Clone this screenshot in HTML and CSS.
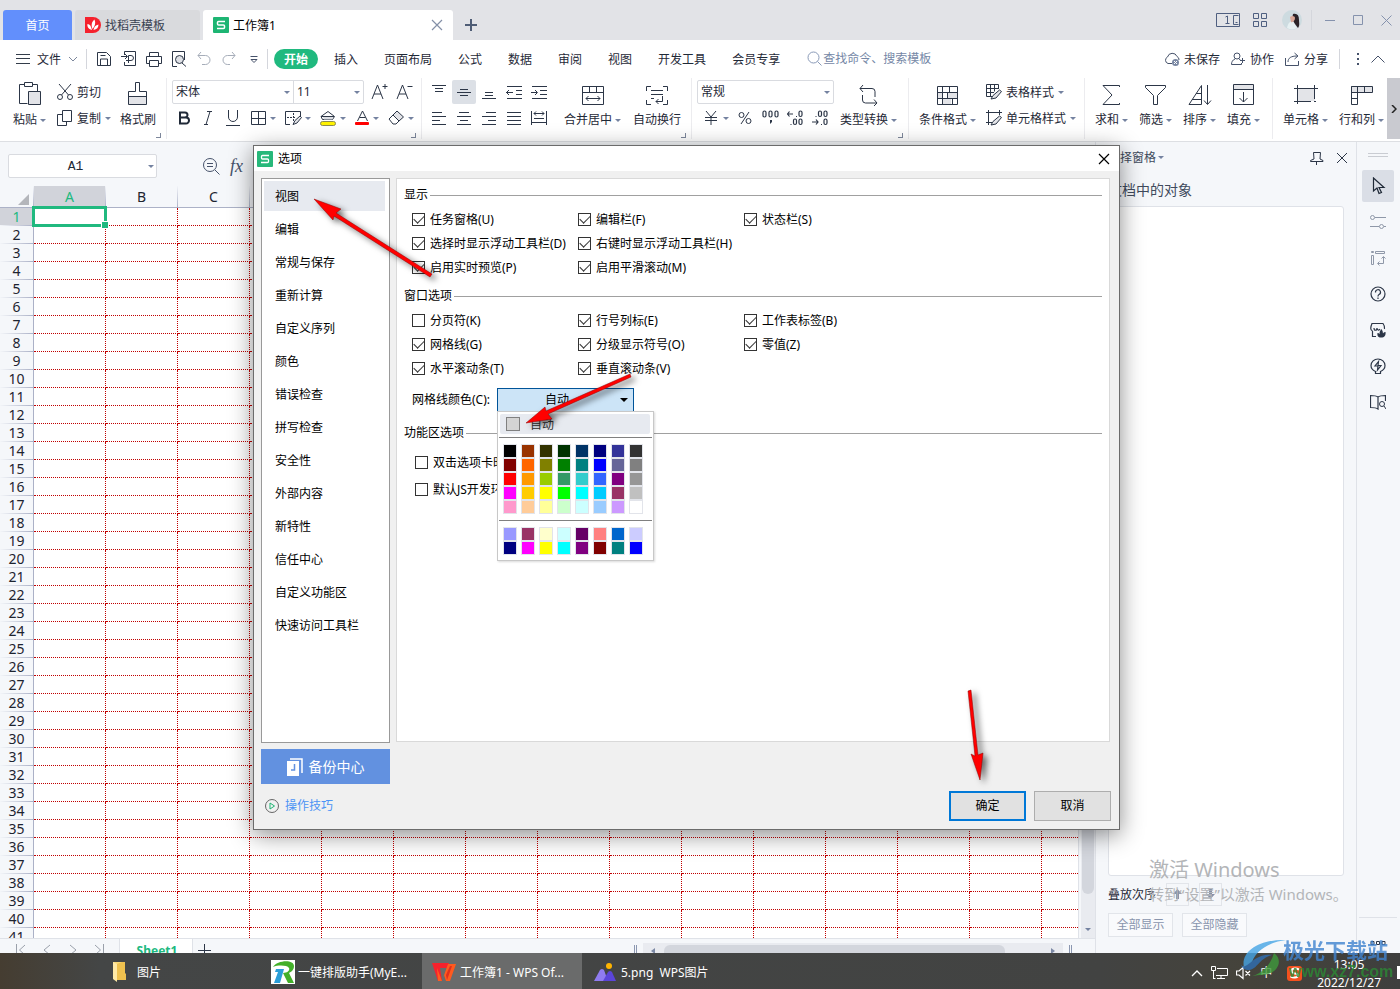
FILE: index.html
```html
<!DOCTYPE html>
<html lang="zh-CN">
<head>
<meta charset="utf-8">
<title>工作簿1 - WPS Office</title>
<link rel="stylesheet" href="styles.css">
</head>
<body>
<div class="desktop">
  <header class="titlebar">
    <button class="tab tab-home"><span>首页</span></button>
    <button class="tab tab-store">
      <svg width="16" height="16" viewBox="0 0 16 16"><path d="M0 0h8a8 8 0 0 1 0 16H0z" fill="#f5222d"/><path d="M7 13C3 12 2 9 2.500 7 5 7 6 9 7 13zM7.500 12C6 8 6.500 5 9.500 2.500 11 6 10 9 7.500 12zM8.500 13C9 10 10.500 8 13.500 7.500 13.500 10.500 12 12.500 8.500 13z" fill="#fff"/></svg>
      <span>找稻壳模板</span>
    </button>
    <button class="tab tab-book">
      <svg width="16" height="16" viewBox="0 0 16 16"><rect width="16" height="16" rx="1" fill="#1db573"/><path d="M12 4.500H5.500a1 1 0 0 0-1 1V7a1 1 0 0 0 1 1h5a1 1 0 0 1 1 1v1.500a1 1 0 0 1-1 1H4" fill="none" stroke="#fff" stroke-width="1.500"/></svg>
      <span>工作簿1</span>
      <svg class="push" width="12" height="12" viewBox="0 0 12 12"><path d="M1 1l10 10M11 1L1 11" stroke="#8490a8" stroke-width="1.200"/></svg>
    </button>
    <button class="plain tab-add" aria-label="新建"><svg width="12" height="12" viewBox="0 0 12 12"><path d="M6 0v12M0 6h12" stroke="#4f5d76" stroke-width="2"/></svg></button>
    <div class="winctl">
      <svg width="24" height="14" viewBox="0 0 24 14"><path d="M.5.500h23v13H.5zM22.500 2.500h-5v9h5M19.500 9.500h2M9.500 4l2-1v8M9.500 10.500h4" fill="none" stroke="#4f5f80"/></svg>
      <svg width="14" height="14" viewBox="0 0 14 14"><path d="M.5.500h5v5h-5zM8.500.500h5v5h-5zM.5 8.500h5v5h-5zM8.500 8.500h5v5h-5z" fill="none" stroke="#4f5f80"/></svg>
      <svg width="20" height="20" viewBox="0 0 20 20"><circle cx="10" cy="10" r="10" fill="#cddbe0"/><path d="M5 18c1-5 3-7 6-7l4 7a10 10 0 0 1-10 0z" fill="#e6f0f2"/><path d="M11 4c4-1 6 1 6 6 0 3 1 5-1 8l-3-4-3-5z" fill="#2a2328"/><path d="M8 7c2-2 5-1 5 1s-2 5-4 4z" fill="#d9a898"/></svg>
      <i class="vline"></i>
      <svg width="10" height="12" viewBox="0 0 10 12"><path d="M0 6.500h10" stroke="#8592ad"/></svg>
      <svg width="10" height="10" viewBox="0 0 10 10"><path d="M.5.500h9v9h-9z" fill="none" stroke="#8592ad"/></svg>
      <svg width="11" height="11" viewBox="0 0 11 11"><path d="M.5.500l10 10M10.500.500l-10 10" stroke="#8592ad"/></svg>
    </div>
  </header>

  <nav class="menubar">
    <button class="plain file-menu">
      <svg width="14" height="10" viewBox="0 0 14 10"><path d="M0 .500h14M0 4.500h14M0 9.500h14" stroke="#333c4a"/></svg>
      <span>文件</span>
      <svg width="10" height="6" viewBox="0 0 10 6"><path d="M1 1l4 4 4-4" fill="none" stroke="#7c879c"/></svg>
    </button>
    <i class="vline"></i>
    <div class="quick">
      <svg width="16" height="16" viewBox="0 0 16 16"><path d="M1.500 1.500h9l4 4v9h-13zM4.500 14v-6h7v6M4.500 4.500h5" fill="none" stroke="#2c3647"/></svg>
      <svg width="16" height="16" viewBox="0 0 16 16"><path d="M3.500 4V.500h11v14h-11V11M0 5.500h6M4 3l2.500 2.500L4 8M7.500 12V4.500H10a2.500 2.500 0 0 1 0 5H5" fill="none" stroke="#2c3647"/></svg>
      <svg width="16" height="16" viewBox="0 0 16 16"><path d="M3.500 5V1.500h9V5M3.500 12.500h-3v-7h15v7h-3M3.500 9.500h9v6h-9z" fill="none" stroke="#2c3647"/></svg>
      <svg width="16" height="16" viewBox="0 0 16 16"><path d="M6 15.500H1.500V.500h12V9" fill="none" stroke="#2c3647"/><circle cx="8.500" cy="8.500" r="4" fill="#dfe1e6" stroke="#2c3647"/><path d="M11 12l4 3.500" stroke="#2c3647"/></svg>
      <svg width="16" height="16" viewBox="0 0 16 16"><path d="M5 1L2 4.500 5 8M2 4.500h7.500a4.500 4.500 0 0 1 0 9H6" fill="none" stroke="#a6adb9"/></svg>
      <svg width="16" height="16" viewBox="0 0 16 16"><path d="M11 1l3 3.500L11 8M14 4.500H6.500a4.500 4.500 0 0 0 0 9H9" fill="none" stroke="#a6adb9"/></svg>
      <svg width="16" height="16" viewBox="0 0 16 16"><path d="M4.500 5.500h7M5 8.500l3 3 3-3z" fill="none" stroke="#46526a"/></svg>
    </div>
    <i class="vline"></i>
    <div class="menus">
      <button class="menu menu-on">开始</button>
      <button class="menu">插入</button>
      <button class="menu">页面布局</button>
      <button class="menu">公式</button>
      <button class="menu">数据</button>
      <button class="menu">审阅</button>
      <button class="menu">视图</button>
      <button class="menu">开发工具</button>
      <button class="menu">会员专享</button>
    </div>
    <label class="search">
      <svg width="16" height="16" viewBox="0 0 16 16"><circle cx="6.500" cy="6.500" r="5.500" fill="none" stroke="#8a9ab8"/><path d="M10.500 10.500l4 4" stroke="#8a9ab8"/></svg>
      <input type="text" aria-label="查找命令" placeholder="查找命令、搜索模板">
    </label>
    <div class="share">
      <button class="plain"><svg width="16" height="16" viewBox="0 0 16 16"><path d="M8 12.500H4A3.500 3.500 0 0 1 3.500 6 5 5 0 0 1 13 5.500 3.500 3.500 0 0 1 15 9" fill="none" stroke="#46526a"/><circle cx="11.500" cy="11.500" r="3.500" fill="#7a88a3"/><path d="M10 10l3 3M13 10l-3 3" stroke="#fff"/></svg><span>未保存</span></button>
      <button class="plain"><svg width="15" height="14" viewBox="0 0 15 14"><circle cx="6" cy="4" r="3" fill="none" stroke="#46526a"/><path d="M4 7C1.500 8 .5 10 .5 12.500h10V11M8 7l1.500 1M9 8.500h5M11.500 6v5" fill="none" stroke="#46526a"/></svg><span>协作</span></button>
      <button class="plain"><svg width="15" height="14" viewBox="0 0 15 14"><path d="M.5 6v7.500h13V9M3 10c0-4 3-6 9-6M9.500 1L13 4 9.500 7" fill="none" stroke="#46526a"/></svg><span>分享</span></button>
      <i class="vline"></i>
      <svg width="3" height="12" viewBox="0 0 3 12"><path d="M0 0h2v2H0zM0 5h2v2H0zM0 10h2v2H0z" fill="#46526a"/></svg>
      <svg width="14" height="8" viewBox="0 0 14 8"><path d="M.5 7.500L7 1l6.500 6.500" fill="none" stroke="#46526a"/></svg>
    </div>
  </nav>

  <section class="ribbon">
    <div class="group g-clip">
      <button class="big"><svg width="22" height="24" viewBox="0 0 22 24"><path d="M5.500 2.500H.5v19h8M13.500 2.500h5V9M5.500.500h8v4h-8z" fill="none" stroke="#2c3647"/><path d="M9.500 9.500h12v13h-12z" fill="#e3e4e8" stroke="#2c3647"/></svg><span>粘贴<i class="caret"></i></span></button>
      <div class="stack">
        <button class="small"><svg width="16" height="16" viewBox="0 0 16 16"><path d="M2 0l9.500 11M14 0L4.500 11" stroke="#2c3647"/><circle cx="3" cy="13" r="2.500" fill="none" stroke="#2c3647"/><circle cx="13" cy="13" r="2.500" fill="none" stroke="#2c3647"/></svg><span>剪切</span></button>
        <button class="small"><svg width="16" height="16" viewBox="0 0 16 16"><path d="M5.500.500h9v11h-9zM5.500 4.500h-5v11h9v-4" fill="none" stroke="#2c3647"/></svg><span>复制</span><i class="caret"></i></button>
      </div>
      <button class="big"><svg width="20" height="24" viewBox="0 0 20 24"><path d="M1 15h17v8H1z" fill="#e3e4e8"/><path d="M7.500 9.500v-9h4v9h7v13h-18v-13zM.5 14.500h18" fill="none" stroke="#2c3647"/></svg><span>格式刷</span></button>
      <i class="corner"></i>
    </div>
    <div class="group g-font">
      <div class="fontrow">
        <div class="combo">
          <div class="pick pick-font"><select aria-label="字体"><option>宋体</option></select><i class="caret"></i></div>
          <div class="pick pick-size"><select aria-label="字号"><option>11</option></select><i class="caret"></i></div>
        </div>
        <svg width="18" height="18" viewBox="0 0 18 18"><path d="M1 16L6.500 2 12 16M3 11h7M11.500 3.500h5M14 1v5" fill="none" stroke="#2c3647"/></svg>
        <svg width="18" height="18" viewBox="0 0 18 18"><path d="M1 16L6.500 2 12 16M3 11h7M11.500 3.500h5" fill="none" stroke="#2c3647"/></svg>
      </div>
      <div class="fmtrow">
        <svg width="14" height="14" viewBox="0 0 14 14"><path d="M3 1.500h5a2.500 2.500 0 0 1 0 5H3zM3 6.500h6a3 3 0 0 1 0 6H3z" fill="none" stroke="#1f2937" stroke-width="2"/></svg>
        <svg width="14" height="14" viewBox="0 0 14 14"><path d="M6 .500h5M3 13.500h4M9 .500L5 13.500" fill="none" stroke="#2c3647"/></svg>
        <svg width="16" height="16" viewBox="0 0 16 16"><path d="M3.500 0v7a4.500 4.500 0 0 0 9 0V0M1 15.500h14" fill="none" stroke="#2c3647"/></svg>
        <span class="withcaret"><svg width="16" height="16" viewBox="0 0 16 16"><path d="M.5 1.500h14v13H.5zM7.500 1.500v13M.5 8.500h14" fill="none" stroke="#2c3647"/></svg><i class="caret"></i></span>
        <span class="withcaret"><svg width="17" height="16" viewBox="0 0 17 16"><path d="M5 14.500H.5V1.500h15V6" fill="none" stroke="#2c3647"/><path d="M2 7.500h8M8.500 3v8" stroke="#2c3647" stroke-dasharray="2 1"/><path d="M8 14.500l2-4L15 6l1.500 1.500-4.500 5.500z" fill="#e3e4e8" stroke="#2c3647"/></svg><i class="caret"></i></span>
        <span class="withcaret"><svg width="17" height="16" viewBox="0 0 17 16"><path d="M2.500 9.500L1 6.500l7-5 6.500 5-2 3z" fill="none" stroke="#2c3647"/><path d="M3 7h10l-1 2.500H4z" fill="#dcdee3"/><path d="M1 6.500h13" stroke="#2c3647"/><rect x=".5" y="11.500" width="15" height="4" rx="2" fill="#fff200" stroke="#8b8a52"/></svg><i class="caret"></i></span>
        <span class="withcaret"><svg width="15" height="16" viewBox="0 0 15 16"><path d="M2.500 11l5-10 5 10M4.500 7.500h6" fill="none" stroke="#2c3647"/><rect y="12" width="14" height="3" rx="1" fill="#f00"/></svg><i class="caret"></i></span>
        <span class="withcaret"><svg width="17" height="16" viewBox="0 0 17 16"><path d="M1 9l4-4 6 6-3 3H5z" fill="none" stroke="#2c3647"/><path d="M5 5l4-4 6.500 6-4.500 4z" fill="#e3e4e8" stroke="#2c3647"/></svg><i class="caret"></i></span>
      </div>
      <i class="corner"></i>
    </div>
    <div class="group g-align">
      <div class="aligns">
        <button><svg width="16" height="16" viewBox="0 0 16 16"><path d="M1 1.500h14M4 4.500h8M4 7.500h8" stroke="#2c3647"/></svg></button>
        <button class="on"><svg width="16" height="16" viewBox="0 0 16 16"><path d="M4 5.500h8M1 8.500h14M4 11.500h8" stroke="#2c3647"/></svg></button>
        <button><svg width="16" height="16" viewBox="0 0 16 16"><path d="M4 8.500h8M4 11.500h8M1 14.500h14" stroke="#2c3647"/></svg></button>
        <button><svg width="16" height="16" viewBox="0 0 16 16"><path d="M1 2.500h15M10 6.500h6M10 10.500h6M1 14.500h15M0 8.500h7M3 6L.5 8.500 3 11" fill="none" stroke="#2c3647"/></svg></button>
        <button><svg width="16" height="16" viewBox="0 0 16 16"><path d="M1 2.500h15M9 6.500h7M9 10.500h7M1 14.500h15M0 8.500h6M4 6l2.500 2.500L4 11" fill="none" stroke="#2c3647"/></svg></button>
        <button><svg width="16" height="16" viewBox="0 0 16 16"><path d="M1 2.500h10M1 6.500h14M1 10.500h8M1 14.500h14" stroke="#2c3647"/></svg></button>
        <button><svg width="16" height="16" viewBox="0 0 16 16"><path d="M3 2.500h10M1 6.500h14M4 10.500h8M1 14.500h14" stroke="#2c3647"/></svg></button>
        <button><svg width="16" height="16" viewBox="0 0 16 16"><path d="M5 2.500h10M1 6.500h14M7 10.500h8M1 14.500h14" stroke="#2c3647"/></svg></button>
        <button><svg width="16" height="16" viewBox="0 0 16 16"><path d="M1 2.500h14M1 6.500h14M1 10.500h14M1 14.500h14" stroke="#2c3647"/></svg></button>
        <button><svg width="16" height="16" viewBox="0 0 16 16"><path d="M.5 1v14M15.500 1v14M3 3.500h10M5 1.500l-2 2 2 2M11 1.500l2 2-2 2M3 8.500h10M1 12.500h14" fill="none" stroke="#2c3647"/></svg></button>
      </div>
      <button class="big"><svg width="22" height="24" viewBox="0 0 22 24"><path d="M.5 4.500h21v18H.5zM.5 10.500h21M7.500 4.500v6M14.500 4.500v6M4 16.500h14M6.500 14L4 16.500 6.500 19M15.500 14l2.500 2.500-2.500 2.500" fill="none" stroke="#2c3647"/></svg><span>合并居中<i class="caret"></i></span></button>
      <button class="big"><svg width="22" height="24" viewBox="0 0 22 24"><path d="M5 4.500H.5V9M17 4.500h4.500V9M.5 18v4.500H5M21.500 18v4.500H17M5 8.500h12M5 12.500h12M5 16.500h3M16.500 14v5.500H10M12.500 17L10 19.500l2.500 2.500" fill="none" stroke="#2c3647"/></svg><span>自动换行</span></button>
      <i class="corner"></i>
    </div>
    <div class="group g-num">
      <div class="stack">
        <div class="combo"><div class="pick pick-num"><select aria-label="数字格式"><option>常规</option></select><i class="caret"></i></div></div>
        <div class="numrow">
          <span class="withcaret"><svg width="14" height="14" viewBox="0 0 14 14"><path d="M2 0l5 6 5-6M1 6.500h12M1 9.500h12M7 6v8" fill="none" stroke="#2c3647"/></svg><i class="caret"></i></span>
          <svg width="14" height="14" viewBox="0 0 14 14"><circle cx="3.500" cy="4" r="2.500" fill="none" stroke="#2c3647"/><circle cx="10.500" cy="10" r="2.500" fill="none" stroke="#2c3647"/><path d="M11 1L3 13" stroke="#2c3647"/></svg>
          <svg width="17" height="16" viewBox="0 0 17 16"><g fill="none" stroke="#2c3647" stroke-width="1.200"><rect x="1" y="1" width="3" height="6" rx="1.500"/><rect x="7" y="1" width="3" height="6" rx="1.500"/><rect x="13" y="1" width="3" height="6" rx="1.500"/></g><path d="M8 10h2v2l-2 2z" fill="#2c3647"/></svg>
          <svg width="17" height="16" viewBox="0 0 17 16"><g fill="none" stroke="#2c3647" stroke-width="1.200"><path d="M0 4h6M2.500 1.500L.5 4l2 2.500M9 6.500h1M3.500 14.500h1"/><rect x="12" y="1" width="3" height="5.500" rx="1.500"/><rect x="6.500" y="9" width="3" height="5.500" rx="1.500"/><rect x="12" y="9" width="3" height="5.500" rx="1.500"/></g></svg>
          <svg width="17" height="16" viewBox="0 0 17 16"><g fill="none" stroke="#2c3647" stroke-width="1.200"><path d="M0 12h6M4 9.500L6 12l-2 2.500M3.500 6.500h1M9 14.500h1"/><rect x="6.500" y="1" width="3" height="5.500" rx="1.500"/><rect x="12" y="1" width="3" height="5.500" rx="1.500"/><rect x="12" y="9" width="3" height="5.500" rx="1.500"/></g></svg>
        </div>
      </div>
      <button class="big"><svg width="20" height="24" viewBox="0 0 20 24"><path d="M4 3L1 6.500 4 10M1 6.500h12a3 3 0 0 1 3 3V15M3.500 13v5a3 3 0 0 0 3 3H18M15 17.500l3 3.500-3 3" fill="none" stroke="#2c3647"/></svg><span>类型转换<i class="caret"></i></span></button>
      <i class="corner"></i>
    </div>
    <div class="group g-style">
      <button class="big"><svg width="22" height="24" viewBox="0 0 22 24"><path d="M1 11h5v5H1zM6 17h8v5H6zM11 11h10v5H11z" fill="#e3e4e8"/><path d="M.5 4.500h20v18H.5zM.5 10.500h20M.5 16.500h20M5.500 4.500v18M12.500 4.500v6M10.500 10.500v6M15.500 16.500v6" fill="none" stroke="#2c3647"/></svg><span>条件格式<i class="caret"></i></span></button>
      <div class="stack">
        <button class="small"><svg width="16" height="16" viewBox="0 0 16 16"><path d="M6 12.500H.5V.500h12V5M.5 4.500h12M.5 8.500H8M4.500.500v12M8.500.500v7" fill="none" stroke="#2c3647"/><path d="M5 15l2-3.500 6.500-5.500 2 1.500-5.500 6.500z" fill="#e3e4e8" stroke="#2c3647"/></svg><span>表格样式</span><i class="caret"></i></button>
        <button class="small"><svg width="16" height="16" viewBox="0 0 16 16"><path d="M0 2.500h16M2.500 0v15M13.500 0v5M0 12.500h6" fill="none" stroke="#2c3647"/><path d="M5 15l2-3.500 6.500-5.500 2 1.500-5.500 6.500z" fill="#e3e4e8" stroke="#2c3647"/></svg><span>单元格样式</span><i class="caret"></i></button>
      </div>
    </div>
    <div class="group g-edit">
      <button class="big"><svg width="20" height="24" viewBox="0 0 20 24"><path d="M17.500 5V3.500H1L10 13 1 22.500h16.500V21" fill="none" stroke="#2c3647"/></svg><span>求和<i class="caret"></i></span></button>
      <button class="big"><svg width="22" height="24" viewBox="0 0 22 24"><path d="M.5 3.500h20v2l-8 8v9h-4v-9l-8-8z" fill="none" stroke="#2c3647"/></svg><span>筛选<i class="caret"></i></span></button>
      <button class="big"><svg width="24" height="24" viewBox="0 0 24 24"><path d="M1 22.500L13.500 3.500v19zM4 17.500h9.500M8 11.500h5.500M19.500 3v19M16 18.500l3.500 4 3.500-4" fill="none" stroke="#2c3647"/></svg><span>排序<i class="caret"></i></span></button>
      <button class="big"><svg width="22" height="24" viewBox="0 0 22 24"><path d="M1 3h20v4H1z" fill="#e3e4e8"/><path d="M.5 2.500h20v20H.5zM.5 7.500h20M10.500 10v10M6.500 16l4 4 4-4" fill="none" stroke="#2c3647"/></svg><span>填充<i class="caret"></i></span></button>
    </div>
    <div class="group g-cells">
      <button class="big"><svg width="24" height="24" viewBox="0 0 24 24"><path d="M4 7h17v12H4z" fill="#e3e4e8"/><path d="M0 6.500h24M3.500 3v19M20.500 3v14M0 19.500h17M20 19.500h2" fill="none" stroke="#2c3647"/></svg><span>单元格<i class="caret"></i></span></button>
      <button class="big"><svg width="22" height="24" viewBox="0 0 22 24"><path d="M1 5h20v5H1z" fill="#e3e4e8"/><path d="M.5 4.500h21v6H.5zM.5 4.500v18h6v-18M13.500 4.500v6M.5 16.500h6" fill="none" stroke="#2c3647"/></svg><span>行和列<i class="caret"></i></span></button>
    </div>
    <button class="ribbon-more" aria-label="更多"><svg width="6" height="8" viewBox="0 0 6 8"><path d="M1 0l4 4-4 4" fill="none" stroke="#222" stroke-width="1.500"/></svg></button>
  </section>

  <main class="work">
    <section class="book">
      <div class="formula">
        <label class="namebox"><input type="text" value="A1" aria-label="名称框"><i class="caret"></i></label>
        <svg width="17" height="17" viewBox="0 0 17 17"><circle cx="7" cy="7" r="6.500" fill="none" stroke="#46526a"/><path d="M4 5.500h6M4 8.500h6M12 12l4.500 4.500" stroke="#46526a"/></svg>
        <i class="fx">fx</i>
      </div>
      <div class="sheetwrap">
        <div class="sheet">
          <table class="cells"><thead><tr id="cols"></tr></thead><tbody id="rows"></tbody></table>
          <div class="cursor"></div>
        </div>
        <div class="vscroll"><div class="vthumb"></div><i class="caret"></i></div>
      </div>
      <div class="sheetbar">
        <div class="sheetnav">
          <svg width="10" height="12" viewBox="0 0 10 12"><path d="M.5 0v12M9 1L3.500 6 9 11" fill="none" stroke="#9aa0aa"/></svg>
          <svg width="10" height="12" viewBox="0 0 10 12"><path d="M8 1L2 6l6 5" fill="none" stroke="#9aa0aa"/></svg>
          <svg width="10" height="12" viewBox="0 0 10 12"><path d="M2 1l6 5-6 5" fill="none" stroke="#9aa0aa"/></svg>
          <svg width="10" height="12" viewBox="0 0 10 12"><path d="M9.500 0v12M1 1l5.500 5L1 11" fill="none" stroke="#9aa0aa"/></svg>
        </div>
        <button class="sheettab">Sheet1</button>
        <button class="plain sheetadd" aria-label="新建工作表"><svg width="13" height="13" viewBox="0 0 13 13"><path d="M6.500 0v13M0 6.500h13" stroke="#2c3647"/></svg></button>
        <div class="hscroll"><i class="grip"></i><div class="htrack"><svg width="4" height="8" viewBox="0 0 4 8"><path d="M4 1v6L0 4z" fill="#7c89a5"/></svg><div class="hthumb"></div><svg width="4" height="8" viewBox="0 0 4 8"><path d="M0 1v6l4-3z" fill="#7c89a5"/></svg></div><i class="grip"></i></div>
      </div>
    </section>

    <aside class="pane">
      <div class="pane-head"><span>选择窗格<i class="caret"></i></span>
        <svg class="push" width="14" height="14" viewBox="0 0 14 14"><path d="M3.500 1.500h7L10 8l3 1.500v1H.5v-1L4 8zM6.500 10.500V14" fill="none" stroke="#2c3647"/></svg>
        <svg width="12" height="12" viewBox="0 0 12 12"><path d="M1 1l10 10M11 1L1 11" stroke="#2c3647"/></svg>
      </div>
      <h2>文档中的对象</h2>
      <div class="objects"></div>
      <div class="order"><span>叠放次序</span>
        <button aria-label="上移"><svg width="9" height="11" viewBox="0 0 9 11"><path d="M4.500 0L9 5H6v5H3V5H0z" fill="#8591a9"/></svg></button>
        <button aria-label="下移"><svg width="9" height="11" viewBox="0 0 9 11"><path d="M4.500 10L9 5H6V0H3v5H0z" fill="#8591a9"/></svg></button>
      </div>
      <div class="showhide"><button>全部显示</button><button>全部隐藏</button></div>
    </aside>

    <aside class="rail">
      <i class="handle"></i>
      <button class="on"><svg width="16" height="18" viewBox="0 0 16 18"><path d="M3.500 1v13l3.500-3 2 5.500 2.500-1L9 10.500h5z" fill="none" stroke="#1f2937" stroke-width="1.200"/></svg></button>
      <button><svg width="16" height="16" viewBox="0 0 16 16"><circle cx="2.500" cy="3.500" r="2" fill="none" stroke="#8f98a8"/><circle cx="11.500" cy="12.500" r="2" fill="none" stroke="#8f98a8"/><path d="M5 3.500h11M0 12.500h9M14 12.500h2" stroke="#8f98a8"/></svg></button>
      <button><svg width="16" height="16" viewBox="0 0 16 16"><path d="M1.500 1.500h2v1h-2zM5.500 1.500h9v2h-9zM1.500 5.500h2v9h-2zM13.500 7v6.500H8M11.500 8.500l2-2 2 2M9.500 11.500l-2 2 2 2" fill="none" stroke="#8f98a8"/></svg></button>
      <button><svg width="16" height="16" viewBox="0 0 16 16"><circle cx="8" cy="8" r="7" fill="none" stroke="#2c3647" stroke-width="1.200"/><path d="M5.500 6.500a2.500 2.500 0 1 1 3.500 2c-1 .5-1 1-1 2M8 11.500v1.500" fill="none" stroke="#2c3647" stroke-width="1.200"/></svg></button>
      <button><svg width="16" height="16" viewBox="0 0 16 16"><path d="M6 14.500H2.500V9M2.500 9C0 8 .5 5 2 1.500h11C14.500 3.500 15 5 14.500 7M4 6c0 3 3 3 3 0 0 2 2 3 3 1" fill="none" stroke="#2c3647" stroke-width="1.200"/><path d="M11 15.500c-3 0-4-2-3.500-4.500 1 0 1.500.5 2 1 0-2 .5-3.500 2-5 1 1.500 1.500 3 1.500 4.500.5-1 1.500-1.500 2.500-1.500.5 3.500-1 5.500-4.500 5.500z" fill="#2c3647"/></svg></button>
      <button><svg width="16" height="17" viewBox="0 0 16 17"><path d="M5.500 13.500C2 12 1 9.500 1 7.500a7 6.500 0 0 1 14 0c0 2-1 4.500-4.500 6v2h-5zM8.500 3.500L5 8h3l-.5 4L11 7.500H8z" fill="none" stroke="#2c3647" stroke-width="1.200"/></svg></button>
      <button><svg width="16" height="16" viewBox="0 0 16 16"><path d="M8 3C6 1.500 3 1.500.5 1.500v12c3 0 5.500 0 7.500 1.500V3c2-1.500 5-1.500 7.500-1.500V7" fill="none" stroke="#2c3647" stroke-width="1.200"/><circle cx="12" cy="10" r="2.500" fill="none" stroke="#2c3647"/><path d="M14 12l2 3" stroke="#2c3647"/></svg></button>
      <div class="rail-foot"><svg width="16" height="6" viewBox="0 0 16 6"><path d="M1 1.500h3v3H1zM6.500 1.500h3v3h-3zM12 1.500h3v3h-3z" fill="none" stroke="#2c3647"/></svg></div>
    </aside>
  </main>

  <footer class="taskbar">
    <div class="task t-folder"><svg width="16" height="22" viewBox="0 0 16 22"><path d="M1 1h9v18l-9-1z" fill="#f9d978"/><path d="M10 1h3v11l1 1v6H5V3z" fill="#efc14f"/><path d="M1 1l4 2v18l-4-3z" fill="#ffe9a6"/></svg><span>图片</span></div>
    <div class="task t-type"><svg width="24" height="24" viewBox="0 0 24 24"><path d="M0 0h24v24H0z" fill="#fff"/><path d="M2 7C6 0 23-1 23 6c0 4-3 6-5 7l5 10h-6l-5-10c5 0 7-3 6-5C16 5 7 5 2 7z" fill="#43b02a"/><path d="M5 9h8L9 23H3l4-11H4z" fill="#2a9ed8"/></svg><span>一键排版助手(MyE...</span></div>
    <div class="task t-wps"><svg width="24" height="20" viewBox="0 0 24 20"><path d="M0 1h17l-2 5H8l2 13H6z" fill="#f5222d"/><path d="M5 6l5 13 6-17h8l-6 17h-4l-2-6-2 6H6z" fill="#ff5a1f"/><path d="M18 4l-4 9 1 5 5-14z" fill="#e0301e"/></svg><span>工作簿1 - WPS Of...</span></div>
    <div class="task t-pic"><svg width="24" height="18" viewBox="0 0 24 18"><circle cx="16" cy="3" r="3" fill="#ffb400"/><path d="M1 18L7 7q2-2 4 0l4 11z" fill="#8f7bf0"/><path d="M10 18l5-9q2-2 4 0l4 9z" fill="#5b45d8"/></svg><span>5.png&nbsp; WPS图片</span></div>
    <div class="tray">
      <svg width="12" height="8" viewBox="0 0 12 8"><path d="M1 7l5-5 5 5" fill="none" stroke="#fff" stroke-width="1.300"/></svg>
      <svg width="17" height="14" viewBox="0 0 17 14"><path d="M6 2.500h10.500v7H5M.5.500h4v4h-4zM10 9.500v3M6 12.500h8M2.500 5v8M2.500 12.500h2" fill="none" stroke="#fff"/></svg>
      <svg width="16" height="14" viewBox="0 0 16 14"><path d="M.5 5v4h2.500L7 12.500v-11L3 5zM9.500 5l4.500 4.500M14 5L9.500 9.500" fill="none" stroke="#fff" stroke-width="1.200"/></svg>
      <span>中</span>
      <svg width="16" height="16" viewBox="0 0 16 16"><rect y="1" width="15" height="15" rx="3" fill="#f4511e"/><path d="M12 4.500C8 2.500 4 4 4.500 6.500S11.500 8 11 10.500 6 13 3.500 11.500" fill="none" stroke="#fff" stroke-width="2"/></svg>
      <div class="clock"><time>13:05</time><time>2022/12/27</time></div>
      <i class="peek"></i>
    </div>
  </footer>

  <section class="dialog" role="dialog" aria-label="选项">
    <header class="dlg-title">
      <svg width="16" height="16" viewBox="0 0 16 16"><rect width="16" height="16" rx="1" fill="#27b87a"/><path d="M12 4.500H5.500a1 1 0 0 0-1 1V7a1 1 0 0 0 1 1h5a1 1 0 0 1 1 1v1.500a1 1 0 0 1-1 1H4" fill="none" stroke="#fff" stroke-width="1.300"/></svg>
      <span>选项</span>
      <button class="plain push" aria-label="关闭"><svg width="12" height="12" viewBox="0 0 12 12"><path d="M1 1l10 10M11 1L1 11" stroke="#000" stroke-width="1.200"/></svg></button>
    </header>
    <div class="dlg-body">
      <div class="dlg-left">
        <nav class="cats">
          <button class="on">视图</button><button>编辑</button><button>常规与保存</button><button>重新计算</button><button>自定义序列</button><button>颜色</button><button>错误检查</button><button>拼写检查</button><button>安全性</button><button>外部内容</button><button>新特性</button><button>信任中心</button><button>自定义功能区</button><button>快速访问工具栏</button>
        </nav>
        <button class="backup"><svg width="16" height="18" viewBox="0 0 16 18"><path d="M3 1h12v14" fill="none" stroke="#fff" stroke-width="1.500"/><path d="M0 3h12v15H0z" fill="#fff"/><path d="M7.500 6v6H4" fill="none" stroke="#6291e0" stroke-width="1.500"/></svg>备份中心</button>
      </div>
      <div class="opts">
        <fieldset class="optgroup">
          <legend>显示</legend>
          <div class="checks">
            <label><input type="checkbox" checked><span>任务窗格(U)</span></label>
            <label><input type="checkbox" checked><span>编辑栏(F)</span></label>
            <label><input type="checkbox" checked><span>状态栏(S)</span></label>
            <label><input type="checkbox" checked><span>选择时显示浮动工具栏(D)</span></label>
            <label class="wide"><input type="checkbox" checked><span>右键时显示浮动工具栏(H)</span></label>
            <label><input type="checkbox" checked><span>启用实时预览(P)</span></label>
            <label><input type="checkbox" checked><span>启用平滑滚动(M)</span></label>
          </div>
        </fieldset>
        <fieldset class="optgroup">
          <legend>窗口选项</legend>
          <div class="checks">
            <label><input type="checkbox"><span>分页符(K)</span></label>
            <label><input type="checkbox" checked><span>行号列标(E)</span></label>
            <label><input type="checkbox" checked><span>工作表标签(B)</span></label>
            <label><input type="checkbox" checked><span>网格线(G)</span></label>
            <label><input type="checkbox" checked><span>分级显示符号(O)</span></label>
            <label><input type="checkbox" checked><span>零值(Z)</span></label>
            <label><input type="checkbox" checked><span>水平滚动条(T)</span></label>
            <label><input type="checkbox" checked><span>垂直滚动条(V)</span></label>
          </div>
          <div class="gridcolor">
            <span>网格线颜色(C):</span>
            <div class="colorpick">
              <button class="colorbtn" aria-expanded="true">自动<i class="caret"></i></button>
              <div class="palette">
                <button class="auto"><i></i><span>自动</span></button>
                <hr>
                <div class="swatches" id="standard"></div>
                <hr>
                <div class="swatches" id="recent"></div>
              </div>
            </div>
          </div>
        </fieldset>
        <fieldset class="optgroup last">
          <legend>功能区选项</legend>
          <div class="loose">
            <label><input type="checkbox"><span>双击选项卡时</span></label>
            <label><input type="checkbox"><span>默认JS开发环</span></label>
          </div>
        </fieldset>
      </div>
    </div>
    <footer class="dlg-foot">
      <a href="#tips"><svg width="14" height="14" viewBox="0 0 14 14"><circle cx="7" cy="7" r="6.500" fill="none" stroke="#666"/><path d="M5 4v6l4.500-3z" fill="none" stroke="#1db573"/></svg>操作技巧</a>
      <button class="ok">确定</button>
      <button>取消</button>
    </footer>
  </section>

  <svg class="arrows" width="1400" height="989" viewBox="0 0 1400 989">
    <g fill="#f00" stroke="#8a0000" stroke-width=".5">
      <path d="M314 199L341 209 336 213 432 274 430 277 334 216 333 220z"/>
      <path d="M526 423L545 407 546 411 630 374 631 377 548 414 552 419z"/>
      <path d="M980 780L971 754 975 756 968 691 971 690 978 755 983 753z"/>
    </g>
  </svg>

  <div class="activate"><p>激活 Windows</p><p>转到“设置”以激活 Windows。</p></div>
  <div class="brand">
    <svg width="48" height="44" viewBox="0 0 48 44"><path d="M4 30C0 12 22 1 46 2 30 4 14 12 11 28z" fill="#45a5e6"/><path d="M1 27c4 4 8-2 14-6 6-4 12-5 17-4-14 4-14 14-23 15-4 0-7-2-8-5z" fill="#2f6fb5"/><path d="M8 39c12-2 22-10 26-24 11 8 2 23-14 22-4 0-7 1-12 2z" fill="#3f9a3c"/></svg>
    <div><b>极光下载站</b><b class="url">www.xz7.com</b></div>
  </div>
</div>
<script src="app.js"></script>
</body>
</html>
```
FILE: styles.css
```css
* { box-sizing: border-box; }
body { margin: 0; font: 12px/16px "Noto Sans", "Noto Sans CJK SC", sans-serif; color: #1f2937; }
button, input, select { font: inherit; color: inherit; margin: 0; padding: 0; border: 0; background: none; border-radius: 0; }
svg { display: block; flex: none; }
.desktop { position: relative; display: flex; flex-direction: column; height: 100vh; overflow: hidden; background: #fff; }
.plain { display: flex; align-items: center; }
.push { margin-left: auto; }
.caret { flex: none; display: inline-block; width: 0; height: 0; border: 3px solid transparent; border-top-color: #7482a0; border-bottom: 0; }
.vline { flex: none; width: 1px; height: 20px; background: #d4d6dc; }
.tab span, .plain span, .small span, .checks span, .loose span, .auto span, .dlg-title span { padding-top: 2px; }

.titlebar { display: flex; align-items: flex-end; height: 40px; padding-left: 3px; background: #e2e3e7; flex: none; }
.tab { display: flex; align-items: center; height: 30px; border-radius: 3px 3px 0 0; margin-right: 3px; gap: 4px; }
.tab-home { width: 69px; justify-content: center; background: #628ffc; color: #fff; }
.tab-store { width: 125px; padding-left: 10px; background: #d9dadd; color: #3a4252; }
.tab-book { width: 250px; padding: 0 10px; background: #fff; color: #000; margin-right: 12px; }
.tab-add { height: 30px; }
.winctl { display: flex; align-items: center; gap: 13px; margin-left: auto; height: 40px; padding-right: 8px; }
.winctl svg:nth-of-type(3) { margin-left: 2px; margin-right: -4px; }
.winctl svg:nth-of-type(4), .winctl svg:nth-of-type(5) { margin-right: 5px; }

.menubar { display: flex; align-items: center; height: 38px; padding-left: 16px; flex: none; }
.file-menu { gap: 7px; width: 70px; }
.quick { display: flex; align-items: center; gap: 9px; margin: 0 5px 0 9px; }
.menus { display: flex; gap: 6px; margin-left: 6px; }
.menu { height: 20px; padding: 2px 10px 0; border-radius: 10px; white-space: nowrap; }
.menu-on { background: #20b97f; color: #fff; font-weight: 700; }
.search { display: flex; align-items: center; margin-left: 17px; }
.search input { width: 120px; }
.search input::placeholder { color: #7587a6; opacity: 1; }
.share { display: flex; align-items: center; gap: 11px; margin-left: auto; padding-right: 15px; }
.share .plain { gap: 4px; }
.share > svg:nth-of-type(1) { margin-left: 6px; }

.ribbon { display: flex; height: 64px; flex: none; border-bottom: 1px solid #dddfe3; }
.group { position: relative; flex: none; display: flex; align-items: flex-start; border-right: 1px solid #ececef; height: 61px; white-space: nowrap; }
.big { display: flex; flex-direction: column; align-items: center; gap: 6px; padding-top: 4px; }
.big span { display: flex; align-items: center; gap: 3px; }
.stack { display: flex; flex-direction: column; gap: 2px; padding-top: 2px; }
.small { display: flex; align-items: center; gap: 4px; height: 24px; }
.corner { position: absolute; right: 5px; bottom: 1px; width: 5px; height: 5px; border: solid #7d879b; border-width: 0 1px 1px 0; }
.g-clip { width: 167px; padding-left: 13px; }
.g-clip .stack { width: 63px; margin: 0 0 0 11px; }
.g-font { width: 255px; padding: 2px 0 0 5px; flex-direction: column; gap: 2px; }
.fontrow { display: flex; align-items: center; gap: 7px; }
.combo { display: flex; border: 1px solid #d9dbe0; border-radius: 2px; height: 24px; background: #fff; }
.pick { display: flex; align-items: center; padding: 0 3px; }
.pick select { appearance: none; flex: 1; min-width: 0; outline: 0; }
.pick-font { width: 121px; border-right: 1px solid #d9dbe0; }
.pick-size { width: 69px; }
.pick-num { width: 135px; }
.fmtrow { display: flex; align-items: center; height: 24px; padding-left: 5px; gap: 10px; }
.withcaret { display: flex; align-items: center; gap: 3px; margin-right: -1px; }
.g-align { width: 270px; padding-left: 5px; }
.aligns { display: grid; grid-template-columns: repeat(5, 24px); gap: 2px 1px; padding-top: 2px; margin-right: 13px; }
.aligns button { display: flex; align-items: center; justify-content: center; height: 24px; }
.aligns .on { background: #dce0e6; border-radius: 2px; }
.g-align .big + .big { margin-left: 12px; }
.g-num { width: 217px; padding-left: 5px; }
.numrow { display: flex; align-items: center; height: 24px; padding-left: 7px; gap: 8px; }
.numrow .withcaret { gap: 5px; margin-right: 1px; }
.numrow > svg:first-of-type { margin-right: 2px; }
.g-num .big { margin-left: 6px; }
.g-style { width: 176px; padding-left: 10px; }
.g-style .stack { margin-left: 10px; }
.g-edit { width: 188px; padding-left: 10px; gap: 11px; }
.g-cells { flex: 1; padding-left: 10px; gap: 11px; border: 0; }
.ribbon-more { display: flex; align-items: center; justify-content: center; width: 13px; height: 61px; background: #c9cad0; }

.work { display: flex; flex: 1; min-height: 0; background: #f5f7fa; }
.book { display: flex; flex-direction: column; flex: 1; min-width: 0; }
.formula { display: flex; align-items: center; height: 44px; padding: 4px 0 0 8px; flex: none; }
.namebox { display: flex; align-items: center; width: 149px; height: 24px; margin-right: 46px; padding-right: 2px; background: #fff; border: 1px solid #d9dbe0; border-radius: 2px; }
.namebox input { flex: 1; min-width: 0; text-align: center; padding: 2px 6px 0 0; font: 13px/16px "Liberation Mono", monospace; }
.fx { margin-left: 10px; font: italic 18px/20px "Liberation Serif", serif; color: #46526a; }
.sheetwrap { display: flex; flex: 1; min-height: 0; }
.sheet { position: relative; flex: 1; min-width: 0; overflow: hidden; border-right: 1px solid #dfe2e8; background: linear-gradient(#f5f7fa 22px, #fff 22px); }
.cells { table-layout: fixed; width: 1114px; border-collapse: separate; border-spacing: 0; font-size: 14px; line-height: 17px; }
.cells th { padding: 0; font-weight: 400; color: #1d2430; background: #f5f7fa; }
.cells thead th { height: 22px; border-bottom: 1px solid #aab0c6; border-right: 1px solid; border-image: linear-gradient(#f5f7fa, #aab0c6) 1; }
.cells tbody th { height: 18px; border-right: 1px solid; border-bottom: 1px solid; border-image: linear-gradient(90deg, #f5f7fa, #aab0c6) 1; }
.cells .rowhead { width: 34px; }
.cells .hot { background: #d1d3da; color: #20b97f; }
.cells td { padding: 0; border: 0 dotted #c00000; border-width: 0 1px 1px 0; background: #fff; }
.selectall { display: block; width: 0; height: 0; margin: 5px 0 0 18px; border: solid transparent; border-width: 0 0 11px 11px; border-bottom-color: #b4b6bb; }
.cursor { position: absolute; left: 32px; top: 20px; width: 75px; height: 21px; border: 3px solid #20b97f; }
.cursor::after { content: ""; position: absolute; right: -4px; bottom: -4px; width: 6px; height: 6px; background: #20b97f; border: solid #fff; border-width: 1px 0 0 1px; }
.vscroll { display: flex; flex-direction: column; align-items: center; justify-content: space-between; width: 14px; padding-bottom: 7px; margin-left: 2px; background: #e9ebf0; }
.vthumb { width: 12px; height: 708px; border-radius: 6px; background: #d3d6dd; }
.sheetbar { display: flex; align-items: stretch; height: 15px; overflow: hidden; flex: none; border-top: 1px solid #dfe2e8; }
.sheetnav { display: flex; gap: 16px; width: 120px; padding: 5px 0 0 16px; border-right: 1px solid #dfe2e8; }
.sheettab { width: 73px; height: 24px; flex: none; padding-left: 2px; background: #fff; border-right: 1px solid #dfe2e8; color: #20b97f; font-weight: 700; }
.sheetadd { height: 23px; padding-left: 5px; }
.hscroll { display: flex; gap: 6px; margin-left: auto; margin-right: 23px; padding-top: 4px; height: 22px; }
.grip { width: 3px; height: 12px; margin-top: 2px; border: solid #8b97b0; border-width: 0 1px; }
.htrack { display: flex; align-items: center; width: 420px; height: 16px; padding: 0 8px; background: #e9ebf0; }
.hthumb { width: 341px; height: 13px; margin: 0 46px 0 9px; border-radius: 6px; background: #d3d6dd; }

.pane { display: flex; flex-direction: column; width: 261px; flex: none; padding: 0 12px 16px; border-left: 1px solid #dfe2e8; color: #404a5c; }
.pane-head { display: flex; align-items: center; height: 31px; gap: 12px; margin-right: -4px; }
.pane-head span { display: flex; align-items: center; gap: 2px; }
.pane h2 { margin: 7px 0 6px; font-size: 14px; line-height: 20px; font-weight: 400; }
.objects { flex: 1; background: #fff; border: 1px solid #dfe2e8; border-radius: 3px; }
.order { display: flex; align-items: center; gap: 10px; margin: 7px 0; color: #1f2937; }
.order button { display: flex; align-items: center; justify-content: center; width: 23px; height: 23px; border: 1px solid #e2e5ea; }
.showhide { display: flex; gap: 9px; color: #8995ad; }
.showhide button { width: 65px; height: 24px; background: #f9fafc; border: 1px solid #e2e5ea; }
.rail { display: flex; flex-direction: column; align-items: center; gap: 4px; width: 44px; flex: none; padding: 11px 2px 0 0; border-left: 1px solid #dfe2e8; }
.handle { width: 20px; height: 4px; margin-bottom: 9px; border: solid #c9ccd2; border-width: 1px 0; }
.rail button { display: flex; align-items: center; justify-content: center; width: 32px; height: 32px; border-radius: 2px; }
.rail .on { background: #dadee6; }
.rail-foot { display: flex; justify-content: center; width: 38px; height: 36px; margin-top: auto; padding-top: 22px; border-top: 1px solid #dfe2e8; }

.taskbar { display: flex; height: 36px; flex: none; color: #fff; background: linear-gradient(90deg, #453d31, #444646 100px, #424342 1100px, #45433b 1250px, #3e3f3e); }
.task { display: flex; align-items: center; gap: 4px; padding-top: 2px; white-space: nowrap; }
.task span { padding-top: 2px; }
.t-folder { width: 159px; margin-left: 112px; gap: 9px; }
.t-type { width: 151px; gap: 3px; }
.t-wps { width: 160px; padding-left: 10px; background: #6a6b6b; }
.t-pic { padding-left: 11px; }
.tray { display: flex; align-items: center; gap: 8px; margin-left: auto; padding-top: 3px; }
.tray svg:nth-of-type(4) { margin-left: 7px; }
.clock { display: flex; flex-direction: column; align-items: center; margin: 2px 8px 0 6px; line-height: 18px; }
.peek { width: 3px; height: 13px; background: #fff; }

.dialog { position: absolute; isolation: isolate; left: 253px; top: 145px; width: 867px; background: #f0f0f0; border: 1px solid #6b6b6b; box-shadow: 0 5px 22px rgba(0, 0, 0, .45); color: #000; }
.dlg-title { display: flex; align-items: center; gap: 5px; height: 25px; padding: 0 9px 0 3px; background: #fff; }
.dlg-title span { padding: 0; }
.dlg-body { display: flex; gap: 6px; padding: 7px 9px 0 7px; }
.dlg-left { display: flex; flex-direction: column; gap: 6px; width: 129px; flex: none; }
.cats { display: flex; flex-direction: column; gap: 3px; height: 565px; padding: 2px 4px 2px 2px; background: #fff; border: 1px solid #999; }
.cats button { height: 30px; padding: 2px 0 0 11px; text-align: left; }
.cats .on { background: #e7eaf0; }
.backup { display: flex; align-items: center; justify-content: center; gap: 6px; height: 35px; background: #6291e0; color: #fff; font-size: 14px; }
.opts { flex: 1; height: 564px; padding: 8px 7px; background: #fff; border: 1px solid #d9d9d9; }
.optgroup { margin: 0 0 8px; padding: 0; border: 0; min-width: 0; }
.optgroup legend { display: flex; align-items: center; width: 100%; padding: 0; }
.optgroup legend::after { content: ""; flex: 1; height: 1px; margin-left: 2px; background: #a0a0a0; }
.checks { display: grid; grid-template-columns: repeat(3, 166px); padding: 4px 0 0 8px; }
.optgroup + .optgroup { margin-top: 9px; }
.checks label, .loose label { display: flex; align-items: center; gap: 5px; height: 24px; white-space: nowrap; }
.checks .wide { grid-column: span 2; }
.optgroup input { appearance: none; position: relative; flex: none; width: 13px; height: 13px; background: #fff; border: 1px solid #333; }
.optgroup input:checked::after { content: ""; position: absolute; left: 1px; top: 1px; width: 9px; height: 5px; border: solid #333; border-width: 0 0 1px 1px; transform: rotate(-45deg); }
.gridcolor { display: flex; align-items: center; gap: 7px; padding: 8px 0 4px 8px; }
.colorpick { position: relative; }
.colorbtn { display: flex; align-items: center; justify-content: center; width: 137px; height: 24px; padding-right: 17px; background: #cce4f7; border: 1px solid #005499; position: relative; }
.colorbtn .caret { position: absolute; right: 5px; top: 9px; border-width: 4px 4px 0; border-top-color: #000; }
.palette { position: absolute; z-index: 1; left: 0; top: 23px; width: 157px; padding: 2px 1px 5px; background: #fff; border: 1px solid #c8c8c8; box-shadow: 1px 1px 2px rgba(0, 0, 0, .15); }
.palette hr { margin: 3px 0 6px; border: 0; height: 1px; background: #808080; }
.auto { display: flex; align-items: center; gap: 10px; width: 150px; height: 20px; padding-left: 6px; margin-left: 1px; background: #e7eaf0; border-radius: 2px; color: #333; }
.auto i { width: 14px; height: 14px; background: #d4d4d4; border: 1px solid #808080; }
.swatches { display: grid; grid-template-columns: repeat(8, 14px); column-gap: 4px; padding-left: 4px; }
.swatches + hr { margin-top: 6px; }
.swatches button { height: 14px; border: 1px solid #e2e4ea; }
.last { margin-bottom: 0; }
.loose { display: flex; flex-direction: column; gap: 3px; padding: 9px 0 0 11px; }
.dlg-foot { display: flex; align-items: center; gap: 8px; padding: 7px 8px 8px 11px; }
.dlg-foot a { display: flex; align-items: center; gap: 6px; margin-right: auto; color: #4c94f5; text-decoration: none; }
.dlg-foot button { width: 77px; height: 30px; background: #e1e1e1; border: 1px solid #adadad; }
.dlg-foot .ok { border: 2px solid #0078d7; }

.arrows { position: absolute; left: 0; top: 0; pointer-events: none; filter: drop-shadow(4px 3px 3px rgba(0, 0, 0, .6)); }
.activate { position: absolute; left: 1149px; top: 857px; color: #b3b5b8; white-space: nowrap; pointer-events: none; }
.activate p { margin: 0; font-size: 20px; line-height: 25px; }
.activate p + p { font-size: 15px; }
.brand { position: absolute; left: 1240px; top: 938px; display: flex; pointer-events: none; opacity: .8; }
.brand div { display: flex; flex-direction: column; margin-left: -5px; white-space: nowrap; }
.brand b { font-size: 21px; line-height: 24px; color: #3f83cf; }
.brand .url { margin-left: 6px; font: 700 16px/20px "Liberation Sans", sans-serif; color: #2c8a35; }
```
FILE: app.js
```javascript
const cols = document.getElementById("cols");
cols.innerHTML = '<th class="rowhead"><i class="selectall"></i></th>' +
  [..."ABCDEFGHIJKLMNO"].map((c, i) => `<th${i ? "" : ' class="hot"'}>${c}</th>`).join("");

const rows = document.getElementById("rows");
for (let r = 1; r <= 41; r++) {
  const tr = document.createElement("tr");
  tr.innerHTML = `<th${r === 1 ? ' class="hot"' : ""}>${r}</th>` + "<td></td>".repeat(15);
  rows.append(tr);
}

const palettes = {
  standard: "000000 993300 333300 003300 003366 000080 333399 333333 800000 ff6600 808000 008000 008080 0000ff 666699 808080 ff0000 ff9900 99cc00 339966 33cccc 3366ff 800080 969696 ff00ff ffcc00 ffff00 00ff00 00ffff 00ccff 993366 c0c0c0 ff99cc ffcc99 ffff99 ccffcc ccffff 99ccff cc99ff ffffff",
  recent: "9999ff 993366 ffffcc ccffff 660066 ff8080 0066cc ccccff 000080 ff00ff ffff00 00ffff 800080 800000 008080 0000ff"
};
for (const [id, list] of Object.entries(palettes)) {
  document.getElementById(id).innerHTML = list.split(" ")
    .map(c => `<button style="background:#${c}" aria-label="#${c}"></button>`).join("");
}
```
